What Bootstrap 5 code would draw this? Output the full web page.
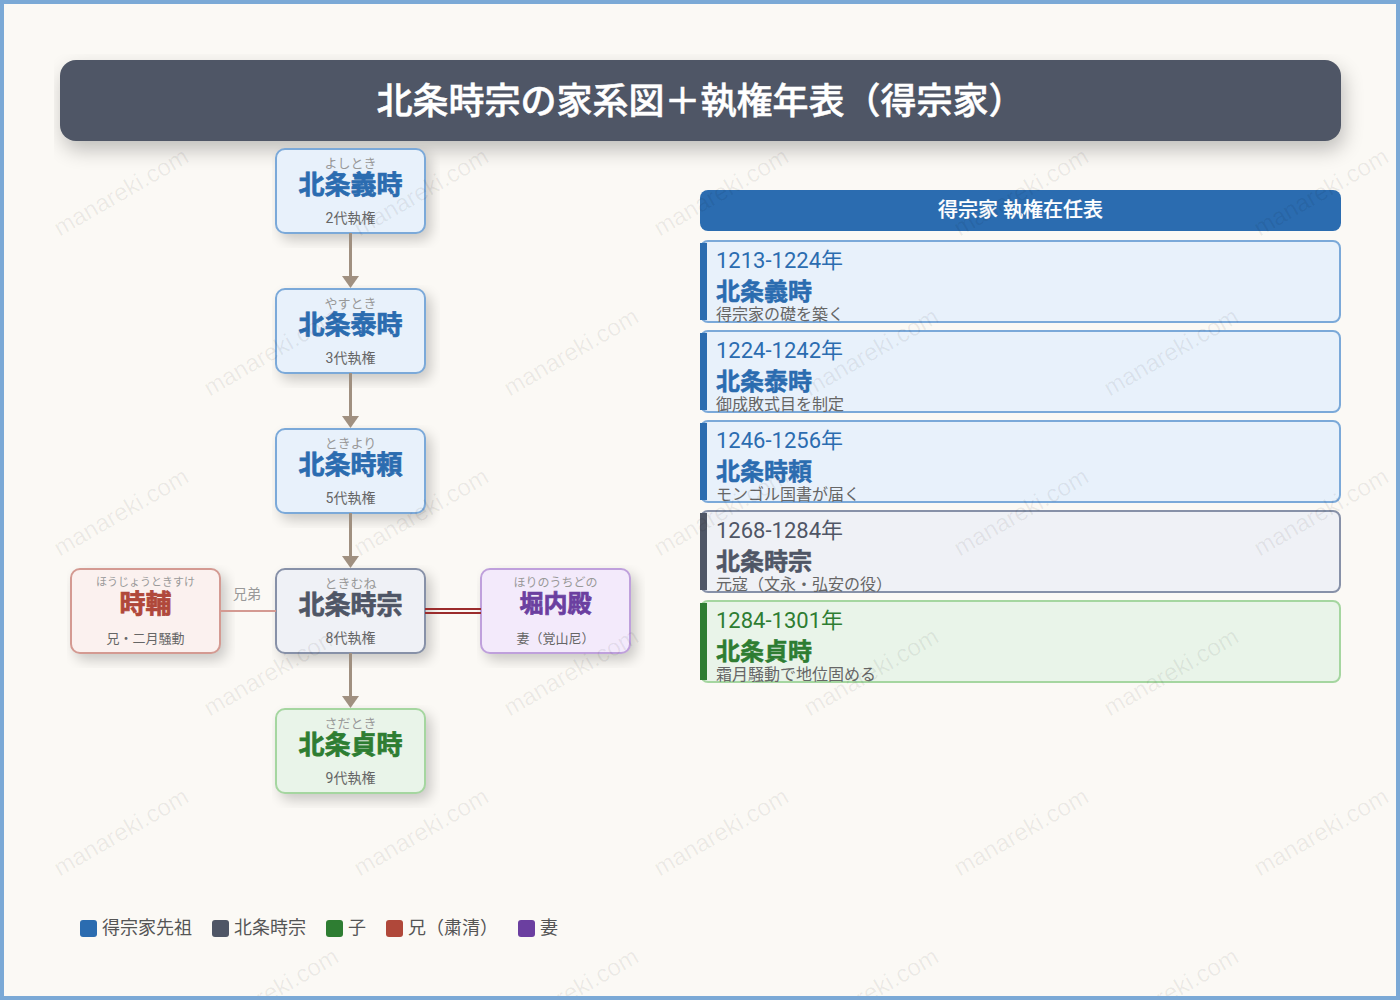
<!DOCTYPE html>
<html lang="ja">
<head>
  <meta charset="UTF-8">
  <meta name="viewport" content="width=device-width, initial-scale=1">
  <title>北条時宗の家系図＋執権年表（得宗家）</title>
  <link href="https://cdn.jsdelivr.net/npm/bootstrap@5.3.0/dist/css/bootstrap.min.css" rel="stylesheet">
  <style>
    body {
      margin: 0;
      background: #fbf9f5;
      font-family: Roboto, "Noto Sans CJK JP", sans-serif;
    }
    .frame {
      position: relative;
      width: 1400px;
      height: 1000px;
      overflow: hidden;
      border: 4px solid #7ba9d6;
      background: #fbf9f5;
    }
    .title-clip {
      position: relative;
      width: 1316px;
      height: 116px;
      margin: 50px 0 -29px 50px;
      padding: 6px 29px 29px 6px;
      overflow: hidden;
    }
    .title-bar {
      height: 81px;
      border-radius: 16px;
      background: #4f5666;
      color: #fff;
      font-size: 36px;
      font-weight: 500;
      line-height: 85px;
      text-align: center;
      -webkit-text-stroke: .5px #fff;
      box-shadow: 3px 9px 20px rgba(0, 0, 0, .24);
    }
    .tree {
      position: relative;
      flex: 0 0 640px;
      height: 668px;
      margin-left: 56px;
    }
    .tree-lines {
      position: absolute;
      inset: 0;
      z-index: 2;
    }
    .node-clip {
      position: absolute;
      padding: 3px 14px 14px 3px;
      overflow: hidden;
    }
    .at-c { left: 212px; }
    .at-l { left: 7px; }
    .at-r { left: 417px; }
    .y1 { top: 4px; }
    .y2 { top: 144px; }
    .y3 { top: 284px; }
    .y4 { top: 424px; }
    .y5 { top: 564px; }
    .person {
      width: 151px;
      height: 86px;
      padding-top: 6px;
      border: 2px solid;
      border-radius: 10px;
      text-align: center;
      box-shadow: 5px 6px 13px rgba(0, 0, 0, .2);
    }
    .kana {
      height: 16px;
      color: #999;
      font-size: 13px;
      line-height: 16px;
    }
    .side .kana {
      height: 15px;
      font-size: 11px;
      line-height: 14px;
    }
    .side .kana-wide { font-size: 12px; }
    .kanji {
      height: 26px;
      font-size: 26px;
      font-weight: 700;
      line-height: 26px;
      -webkit-text-stroke: .7px currentColor;
    }
    .kanji-sm { font-size: 24px; }
    .gen {
      margin-top: 11px;
      color: #666;
      font-size: 14px;
      line-height: 18px;
    }
    .side .gen {
      margin-top: 13px;
      font-size: 13px;
    }
    .kin-label {
      position: absolute;
      left: 173px;
      top: 444px;
      z-index: 3;
      color: #999;
      font-size: 14px;
      line-height: 18px;
    }
    .tone-blue { background: #e8f1fb; border-color: #7ba9d9; color: #2b6cb0; }
    .tone-slate { background: #eff1f6; border-color: #8791a8; color: #4f5666; }
    .tone-green { background: #e9f4e9; border-color: #a5d6a0; color: #2e7d32; }
    .tone-red { background: #fbf1ef; border-color: #d49a92; color: #b0483a; }
    .tone-purple { background: #f3eafb; border-color: #bfa0dc; color: #6b3fa0; }
    .reign-panel {
      flex: 0 0 641px;
      margin-top: 49px;
    }
    .reign-head {
      height: 41px;
      margin-bottom: 9px;
      border-radius: 8px;
      background: #2b6cb0;
      color: #fff;
      font-size: 20px;
      font-weight: 500;
      line-height: 40px;
      text-align: center;
      -webkit-text-stroke: .2px #fff;
    }
    .reign-row {
      position: relative;
      height: 83px;
      margin-bottom: 7px;
      padding: 5px 0 0 14px;
      border-width: 2px;
      border-style: solid;
      border-radius: 8px;
    }
    .reign-row::before {
      content: "";
      position: absolute;
      left: -2px;
      top: 1px;
      bottom: 1px;
      width: 7px;
      background: currentColor;
    }
    .reign-year {
      font-size: 22px;
      line-height: 28px;
    }
    .reign-name {
      margin-top: 2px;
      font-size: 24px;
      font-weight: 700;
      line-height: 30px;
      -webkit-text-stroke: .5px currentColor;
    }
    .reign-note {
      margin-top: -2px;
      color: #666;
      font-size: 16px;
      line-height: 20px;
    }
    .legend {
      margin: 106px 0 0 76px;
      color: #555;
      font-size: 18px;
      line-height: 26px;
      gap: 20px;
    }
    .legend-item { gap: 5px; }
    .swatch {
      display: inline-block;
      width: 17px;
      height: 17px;
      border-radius: 3px;
    }
    .watermark {
      position: absolute;
      inset: -4px;
      z-index: 5;
      pointer-events: none;
      font-family: "Liberation Sans", sans-serif;
      font-size: 24px;
    }
  </style>
</head>
<body>

<div class="frame">
  <div class="title-clip">
    <div class="title-bar">北条時宗の家系図＋執権年表（得宗家）</div>
  </div>

  <div class="d-flex">
    <!-- 家系図 -->
    <div class="tree">
      <svg class="tree-lines" width="640" height="668" viewBox="60 141 640 668">
        <g stroke="#a09080" stroke-width="3">
          <line x1="350.5" y1="233" x2="350.5" y2="278"/>
          <line x1="350.5" y1="373" x2="350.5" y2="418"/>
          <line x1="350.5" y1="513" x2="350.5" y2="558"/>
          <line x1="350.5" y1="653" x2="350.5" y2="698"/>
        </g>
        <g fill="#a09080">
          <polygon points="342,276 359,276 350.5,288"/>
          <polygon points="342,416 359,416 350.5,428"/>
          <polygon points="342,556 359,556 350.5,568"/>
          <polygon points="342,696 359,696 350.5,708"/>
        </g>
        <line x1="220" y1="611" x2="276" y2="611" stroke="#d49a92" stroke-width="2"/>
        <line x1="425" y1="609" x2="481" y2="609" stroke="#9b2c2c" stroke-width="2"/>
        <line x1="425" y1="613" x2="481" y2="613" stroke="#9b2c2c" stroke-width="2"/>
      </svg>

      <div class="node-clip at-c y1">
        <div class="person tone-blue">
          <div class="kana">よしとき</div>
          <div class="kanji">北条義時</div>
          <div class="gen">2代執権</div>
        </div>
      </div>
      <div class="node-clip at-c y2">
        <div class="person tone-blue">
          <div class="kana">やすとき</div>
          <div class="kanji">北条泰時</div>
          <div class="gen">3代執権</div>
        </div>
      </div>
      <div class="node-clip at-c y3">
        <div class="person tone-blue">
          <div class="kana">ときより</div>
          <div class="kanji">北条時頼</div>
          <div class="gen">5代執権</div>
        </div>
      </div>
      <div class="node-clip at-c y4">
        <div class="person tone-slate">
          <div class="kana">ときむね</div>
          <div class="kanji">北条時宗</div>
          <div class="gen">8代執権</div>
        </div>
      </div>
      <div class="node-clip at-c y5">
        <div class="person tone-green">
          <div class="kana">さだとき</div>
          <div class="kanji">北条貞時</div>
          <div class="gen">9代執権</div>
        </div>
      </div>
      <div class="node-clip at-l y4 side">
        <div class="person tone-red">
          <div class="kana">ほうじょうときすけ</div>
          <div class="kanji">時輔</div>
          <div class="gen">兄・二月騒動</div>
        </div>
      </div>
      <div class="node-clip at-r y4 side">
        <div class="person tone-purple">
          <div class="kana kana-wide">ほりのうちどの</div>
          <div class="kanji kanji-sm">堀内殿</div>
          <div class="gen">妻（覚山尼）</div>
        </div>
      </div>
      <div class="kin-label">兄弟</div>
    </div>

    <!-- 執権在任表 -->
    <div class="reign-panel">
      <div class="reign-head">得宗家 執権在任表</div>
      <div class="reign-row tone-blue">
        <div class="reign-year">1213-1224年</div>
        <div class="reign-name">北条義時</div>
        <div class="reign-note">得宗家の礎を築く</div>
      </div>
      <div class="reign-row tone-blue">
        <div class="reign-year">1224-1242年</div>
        <div class="reign-name">北条泰時</div>
        <div class="reign-note">御成敗式目を制定</div>
      </div>
      <div class="reign-row tone-blue">
        <div class="reign-year">1246-1256年</div>
        <div class="reign-name">北条時頼</div>
        <div class="reign-note">モンゴル国書が届く</div>
      </div>
      <div class="reign-row tone-slate">
        <div class="reign-year">1268-1284年</div>
        <div class="reign-name">北条時宗</div>
        <div class="reign-note">元寇（文永・弘安の役）</div>
      </div>
      <div class="reign-row tone-green">
        <div class="reign-year">1284-1301年</div>
        <div class="reign-name">北条貞時</div>
        <div class="reign-note">霜月騒動で地位固める</div>
      </div>
    </div>
  </div>

  <!-- 凡例 -->
  <div class="legend d-flex align-items-center">
    <div class="legend-item d-flex align-items-center"><span class="swatch" style="background:#2b6cb0"></span>得宗家先祖</div>
    <div class="legend-item d-flex align-items-center"><span class="swatch" style="background:#4f5666"></span>北条時宗</div>
    <div class="legend-item d-flex align-items-center"><span class="swatch" style="background:#2e7d32"></span>子</div>
    <div class="legend-item d-flex align-items-center"><span class="swatch" style="background:#b0483a"></span>兄（粛清）</div>
    <div class="legend-item d-flex align-items-center"><span class="swatch" style="background:#6b3fa0"></span>妻</div>
  </div>

  <svg class="watermark" width="1400" height="1000" id="marks"></svg>
</div>

<script src="https://cdn.jsdelivr.net/npm/bootstrap@5.3.0/dist/js/bootstrap.bundle.min.js"></script>
<script>
  // 透かしを斜めに並べる
  const marks = document.getElementById('marks');
  for (let row = 0; row < 6; row++) {
    for (let col = 0; col < 5; col++) {
      const x = 125 + (row % 2 ? 150 : 0) + col * 300;
      const y = 199 + row * 160;
      const t = document.createElementNS('http://www.w3.org/2000/svg', 'text');
      t.setAttribute('x', x);
      t.setAttribute('y', y);
      t.setAttribute('text-anchor', 'middle');
      t.setAttribute('fill', 'rgba(0,0,0,.065)');
      t.setAttribute('transform', 'rotate(-30 ' + x + ' ' + y + ')');
      t.textContent = 'manareki.com';
      marks.appendChild(t);
    }
  }
</script>

</body>
</html>
